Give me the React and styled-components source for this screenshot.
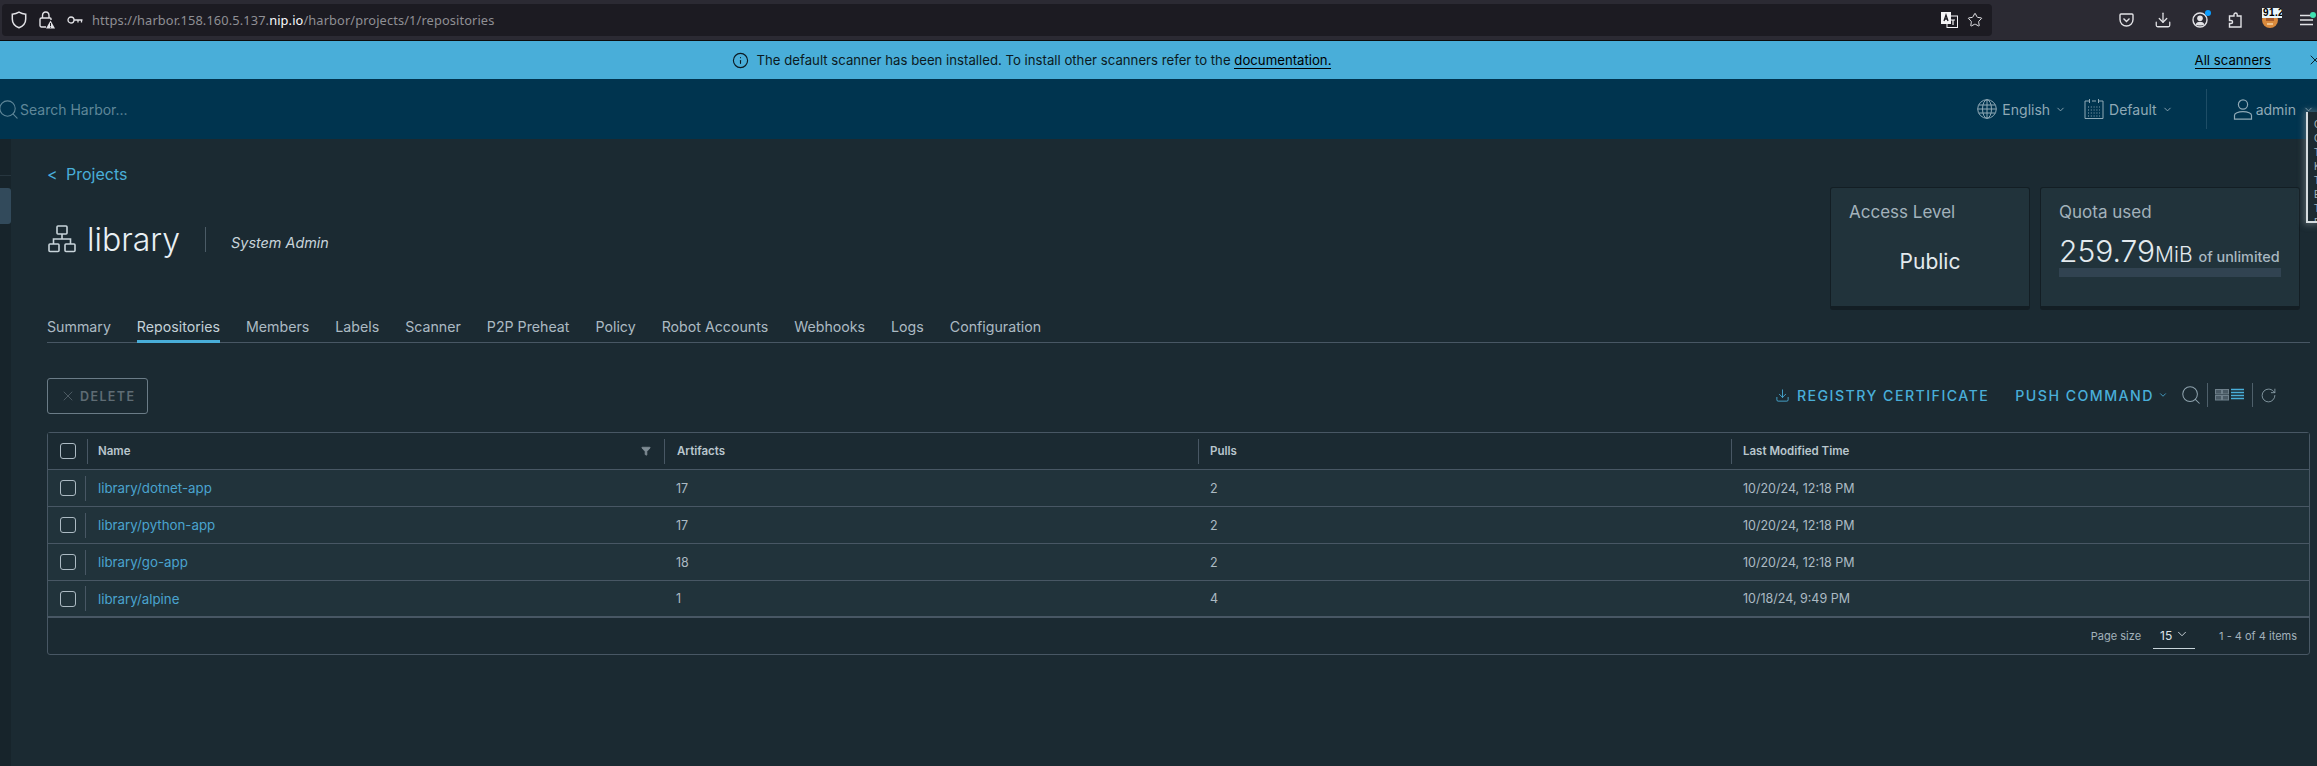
import React from 'react';
import styled, { createGlobalStyle } from 'styled-components';
import { ChevronDown, Search, X, Download, RotateCw, Info, Star, Filter } from 'lucide-react';

const FONT = 'Inter, "Open Sans", "Liberation Sans", sans-serif';

const GlobalStyle = createGlobalStyle`
  html, body {
    margin: 0;
    height: 100%;
    overflow: hidden;
    background: #1b2a32;
    font-family: ${FONT};
  }
  #root { height: 100%; }
  * { box-sizing: border-box; }
`;

const Page = styled.div`
  display: flex;
  flex-direction: column;
  height: 100vh;
  position: relative;
  overflow: hidden;
`;

/* browser chrome */
const BrowserBar = styled.div`
  display: flex;
  align-items: center;
  flex: none;
  height: 41px;
  padding: 0 4px 1px 2px;
  background: #2b2a33;
  border-bottom: 1px solid #0c0c0d;
  color: #e2e2e6;
`;

const UrlPill = styled.div`
  display: flex;
  align-items: center;
  width: 1990px;
  height: 32px;
  padding: 0 9px;
  background: #1c1b22;
  border-radius: 4px;
`;

const UrlIcon = styled.span`
  display: flex;
  flex: none;
  margin-left: ${({ $left }) => $left || 0}px;
`;

const UrlText = styled.div`
  margin-left: 9px;
  font: 12.8px "Noto Sans", ${FONT};
  letter-spacing: 0.12px;
  color: #8f8f94;
  flex: 1;
  b { font-weight: 400; color: #fbfbfe; }
`;

const BrowserTools = styled.div`
  display: flex;
  align-items: center;
  margin-left: auto;
  gap: 20px;
`;

const ToolIcon = styled.span`
  position: relative;
  display: flex;
  flex: none;
  margin-left: ${({ $left }) => $left || 0}px;
`;

const Dot = styled.i`
  position: absolute;
  top: -2px;
  right: -3px;
  width: 6px;
  height: 6px;
  border-radius: 50%;
  background: ${({ $color }) => $color};
`;

const AddonBadge = styled.span`
  position: absolute;
  top: -4px;
  left: 0;
  width: 20px;
  height: 10px;
  padding-left: 1px;
  overflow: hidden;
  background: #e9f6fb;
  color: #000;
  font: 700 10px/10px "Liberation Sans", sans-serif;
  letter-spacing: 0.4px;
  white-space: nowrap;
`;

/* info banner */
const Banner = styled.div`
  position: relative;
  display: flex;
  align-items: center;
  justify-content: center;
  flex: none;
  height: 38px;
  padding-right: 254px;
  background: #49aed9;
  color: #0b1a22;
  font-size: 13.2px;
`;

const BannerText = styled.span`
  margin-left: 8px;
`;

const BannerLink = styled.a`
  color: #000;
  text-decoration: none;
  border-bottom: 1px solid #000;
`;

const BannerRight = styled.div`
  position: absolute;
  right: 0;
  top: 0;
  height: 100%;
  display: flex;
  align-items: center;
  gap: 36px;
`;

/* harbor header */
const Header = styled.header`
  display: flex;
  align-items: center;
  flex: none;
  height: 60px;
  background: #00344f;
  color: #8fa9b6;
`;

const SearchBox = styled.div`
  display: flex;
  align-items: center;
  color: #5f8799;
  font-size: 14px;
`;

const HeaderRight = styled.div`
  display: flex;
  align-items: center;
  margin-left: auto;
  font-size: 14px;
`;

const HeaderItem = styled.div`
  display: flex;
  align-items: center;
  margin-left: ${({ $left }) => $left}px;
  gap: ${({ $gap }) => $gap || 5}px;
`;

const HeaderDivider = styled.div`
  width: 1px;
  height: 40px;
  margin-left: 33px;
  background: #1e4d66;
`;

const Body = styled.div`
  display: flex;
  flex: 1;
  min-height: 0;
`;

const Sidebar = styled.aside`
  flex: none;
  width: 11px;
  background: #17242b;
  padding-top: 36px;
`;

const SideRule = styled.div`
  height: 1px;
  background: #27363f;
`;

const SideActive = styled.div`
  height: 36px;
  margin-top: 12px;
  background: #324a5b;
  border-radius: 0 3px 3px 0;
`;

const Main = styled.main`
  flex: 1;
  min-width: 0;
  padding: 0 7px 0 36px;
  color: #acbac3;
`;

const TopRow = styled.div`
  display: flex;
  justify-content: space-between;
  height: 174px;
`;

const BackLink = styled.a`
  display: flex;
  align-items: center;
  height: 20px;
  margin-top: 25px;
  font-size: 16px;
  color: #49aed9;
`;

const BackArrow = styled.span`
  width: 19px;
`;

const TitleRow = styled.div`
  display: flex;
  align-items: center;
  margin-top: 37px;
  padding-left: 1px;
  height: 36px;
`;

const Title = styled.h1`
  margin: 0 0 0 11px;
  font-size: 32px;
  font-weight: 300;
  letter-spacing: 0;
  color: #e9f0f4;
`;

const TitleRule = styled.div`
  width: 1px;
  height: 25px;
  margin: 0 25px 0 25px;
  background: #4b5b66;
`;

const Role = styled.span`
  font-size: 14.4px;
  font-style: italic;
  color: #c8d4da;
  margin-top: 6px;
`;

const Cards = styled.div`
  display: flex;
  gap: 10px;
  margin: 48px 10px 0 0;
`;

const Card = styled.div`
  width: ${({ $width }) => $width}px;
  height: 123px;
  padding: 13px 18px;
  background: #21333b;
  border: 1px solid #131e24;
  border-bottom: 4px solid #131e24;
  border-radius: 3px;
`;

const CardTitle = styled.div`
  font-size: 17px;
  line-height: 22px;
  color: #a3b2bb;
`;

const PublicValue = styled.div`
  margin-top: 25px;
  font-size: 21px;
  line-height: 28px;
  text-align: center;
  color: #e3eaee;
`;

const QuotaValue = styled.div`
  display: flex;
  align-items: baseline;
  margin-top: 12px;
  height: 33px;
  color: #e3eaee;
  white-space: nowrap;
`;

const QuotaNumber = styled.span`
  font-size: 30px;
  line-height: 33px;
  font-weight: 300;
`;

const QuotaUnit = styled.span`
  font-size: 21px;
  font-weight: 300;
`;

const QuotaLimit = styled.span`
  margin-left: 6px;
  font-size: 14.4px;
  font-weight: 500;
  color: #a9b8c1;
`;

const QuotaBar = styled.div`
  width: 222px;
  height: 9px;
  background: #314351;
`;

const Tabs = styled.nav`
  display: flex;
  gap: 26px;
  height: 30px;
  border-bottom: 1px solid #485764;
`;

const Tab = styled.a`
  height: 30px;
  font-size: 14.2px;
  line-height: 28px;
  color: ${({ $active }) => ($active ? '#c4d1d8' : '#acbac3')};
  border-bottom: 3px solid ${({ $active }) => ($active ? '#49aed9' : 'transparent')};
  white-space: nowrap;
`;

const Toolbar = styled.div`
  display: flex;
  align-items: center;
  justify-content: space-between;
  height: 36px;
  margin-top: 35px;
`;

const DeleteButton = styled.button`
  display: flex;
  align-items: center;
  gap: 4px;
  width: 101px;
  height: 36px;
  padding: 0 0 0 12px;
  background: transparent;
  border: 1px solid #6b7c87;
  border-radius: 3px;
  color: #5f6c74;
  font: 600 12.5px ${FONT};
  letter-spacing: 1.4px;
`;

const ToolbarRight = styled.div`
  display: flex;
  align-items: center;
  margin: 0 33px 2px 0;
  color: #49aed9;
`;

const ActionLink = styled.a`
  display: flex;
  align-items: center;
  gap: 7px;
  margin-left: ${({ $left }) => $left || 0}px;
  font-size: 14.2px;
  font-weight: 500;
  letter-spacing: 1.45px;
  white-space: nowrap;
`;

const ToolDivider = styled.div`
  width: 1px;
  height: 24px;
  margin: 0 7px;
  background: #4f606b;
`;

const RepoTable = styled.div`
  margin-top: 18px;
  border: 1px solid #485764;
  border-radius: 3px;
  font-size: 12.5px;
`;

const Row = styled.div`
  display: grid;
  grid-template-columns: 40px 576px 534px 533px 1fr;
  height: 37px;
  background: ${({ $head }) => ($head ? '#1b2a32' : '#21333b')};
  border-bottom: 1px solid #485764;
  &:nth-child(5) {
    border-bottom-width: 2px;
  }
`;

const CheckCell = styled.div`
  display: flex;
  align-items: center;
  justify-content: flex-end;
  gap: ${({ $head }) => ($head ? 11 : 9)}px;
  padding-right: ${({ $head }) => ($head ? 0 : 2)}px;
`;

const Checkbox = styled.span`
  width: 16px;
  height: 16px;
  border: 1px solid #acbac3;
  border-radius: 3px;
`;

const ColRule = styled.span`
  flex: none;
  width: 1px;
  height: 25px;
  margin-right: ${({ $right }) => $right || 0}px;
  background: #485764;
`;

const Cell = styled.div`
  display: flex;
  align-items: center;
  padding-left: ${({ $pad }) => $pad || 12}px;
`;

const HeadCell = styled(Cell)`
  gap: 12px;
  padding-left: 0;
  font-size: 11.5px;
  font-weight: 600;
  color: #b9c6cd;
`;

const HeadLabel = styled.span`
  margin-left: ${({ $left }) => $left}px;
`;

const RepoLink = styled.a`
  font-size: 13.3px;
  color: #4aa3cf;
`;

const FilterSlot = styled.span`
  display: flex;
  margin-left: auto;
  margin-right: 1px;
  color: #7f8c94;
`;

const TableFooter = styled.div`
  display: flex;
  align-items: center;
  justify-content: flex-end;
  height: 36px;
  padding-right: 12px;
  font-size: 11px;
  color: #a3b2bb;
`;

const PageSelect = styled.div`
  display: flex;
  align-items: center;
  justify-content: space-between;
  width: 42px;
  height: 25px;
  margin: 0 24px 0 12px;
  padding: 0 6px 0 7px;
  border-bottom: 1px solid #c8d4da;
  color: #dbe4e9;
  font-size: 12px;
`;

const CornerPanel = styled.div`
  position: absolute;
  top: 112px;
  right: 0;
  width: 11px;
  height: 111px;
  padding: 6px 0 0 6px;
  overflow: hidden;
  background: #1c2a31;
  border-left: 2px solid #d5dcdf;
  border-bottom: 2px solid #d5dcdf;
  box-shadow: 0 0 6px 2px rgba(120, 130, 135, 0.6);
  color: #a8b4ba;
  font: 10px/14px "Liberation Sans", sans-serif;
`;

const ShieldIcon = () => (
  <svg width="16" height="18" viewBox="0 0 16 18" fill="none" stroke="currentColor" strokeWidth="1.5">
    <path d="M8 1.2 C5.5 2.6 3.4 3 1.3 3.2 V8 C1.3 12.4 4.5 15.4 8 16.8 C11.5 15.4 14.7 12.4 14.7 8 V3.2 C12.6 3 10.5 2.6 8 1.2 Z" />
  </svg>
);

const LockWarnIcon = () => (
  <svg width="16" height="18" viewBox="0 0 16 18" fill="none" stroke="currentColor" strokeWidth="1.4">
    <path d="M3.5 7 V4.8 C3.5 2.6 5 1 6.8 1 S10 2.6 10 4.8 V7" />
    <path d="M7 16 H2.5 C1.6 16 1 15.4 1 14.6 V8.4 C1 7.6 1.6 7 2.5 7 H11 C11.6 7 12 7.3 12 7.8 V9" />
    <path d="M11.5 9.5 L16 17.5 H7 Z" fill="currentColor" stroke="none" />
    <path d="M11.5 12 V15 M11.5 15.8 V16.6" stroke="#1c1b22" strokeWidth="1" />
  </svg>
);

const KeyIcon = () => (
  <svg width="16" height="10" viewBox="0 0 16 10" fill="none" stroke="currentColor" strokeWidth="1.3">
    <circle cx="4" cy="5" r="3" />
    <path d="M7 5 H15.5 M11 5 V7.5 M14.5 5 V7.5" />
  </svg>
);

const TranslateIcon = () => (
  <svg width="17" height="16" viewBox="0 0 17 16">
    <rect x="6" y="4" width="10.5" height="11.5" fill="#1c1b22" stroke="#f4f4f6" />
    <rect x="0" y="0" width="10" height="12" fill="#f4f4f6" />
    <path d="M3 9 L5 3 L7 9 M3.8 7 H6.2" stroke="#1c1b22" strokeWidth="1.3" fill="none" />
    <path d="M10 8 H14 M12 8 V13" stroke="#f4f4f6" strokeWidth="1.2" />
  </svg>
);

const PocketIcon = () => (
  <svg width="15" height="14" viewBox="0 0 15 14" fill="none" stroke="currentColor" strokeWidth="1.4">
    <path d="M2 1 H13 C13.6 1 14 1.4 14 2 V6.5 C14 10.2 11 13 7.5 13 S1 10.2 1 6.5 V2 C1 1.4 1.4 1 2 1 Z" />
    <path d="M4.5 5.5 L7.5 8.5 L10.5 5.5" />
  </svg>
);

const AccountIcon = () => (
  <svg width="16" height="16" viewBox="0 0 16 16" fill="none">
    <circle cx="8" cy="8" r="7" stroke="currentColor" strokeWidth="1.4" />
    <circle cx="8" cy="6.2" r="2.8" fill="currentColor" />
    <path d="M3.6 12.4 C4.6 10.4 6 9.8 8 9.8 S11.4 10.4 12.4 12.4 C11 13.8 5 13.8 3.6 12.4 Z" fill="currentColor" />
  </svg>
);

const PuzzleIcon = () => (
  <svg width="14" height="16" viewBox="0 0 14 16" fill="none" stroke="currentColor" strokeWidth="1.4">
    <path d="M6 4 V2.6 C6 1.6 6.8 1 7.6 1 S9.2 1.6 9.2 2.6 V4 H13 V15 H1.5 V11.5 H3 C4 11.5 4.6 10.8 4.6 10 S4 8.5 3 8.5 H1.5 V4 Z" />
  </svg>
);

const AddonIcon = () => (
  <svg width="16" height="16" viewBox="0 0 16 16">
    <circle cx="8" cy="8" r="8" fill="#d98a3d" />
    <rect x="4" y="6" width="8" height="3" fill="#a85a2a" />
    <path d="M5 12 H11" stroke="#f6d4a8" strokeWidth="1.5" />
  </svg>
);

const MenuIcon = () => (
  <svg width="13" height="12" viewBox="0 0 13 12" stroke="currentColor" strokeWidth="1.4">
    <path d="M0 1.5 H13 M0 6 H13 M0 10.5 H13" />
  </svg>
);

const GlobeIcon = () => (
  <svg width="20" height="20" viewBox="0 0 20 20" fill="none" stroke="currentColor" strokeWidth="1">
    <circle cx="10" cy="10" r="9.3" />
    <ellipse cx="10" cy="10" rx="4.5" ry="9.3" />
    <path d="M10 0.7 V19.3 M1.6 6 H18.4 M0.8 10 H19.2 M1.6 14 H18.4" />
  </svg>
);

const CalendarIcon = () => (
  <svg width="20" height="22" viewBox="0 0 20 22" fill="none" stroke="currentColor" strokeWidth="1">
    <path d="M5 3 H1 V20.5 H19 V3 H15 M8 3 H12" />
    <path d="M5.5 1 V5 M14.5 1 V5" />
    <path d="M4 9 H16 M4 12 H16 M4 15 H16 M4 18 H16" strokeDasharray="1 1.8" />
  </svg>
);

const UserIcon = () => (
  <svg width="20" height="21" viewBox="0 0 20 21" fill="none" stroke="currentColor" strokeWidth="1.2">
    <circle cx="10" cy="5.5" r="4.6" />
    <path d="M1.5 20.2 V16.2 C1.5 14.6 5 12.6 10 12.6 S18.5 14.6 18.5 16.2 V20.2 Z" />
  </svg>
);

const ProjectIcon = () => (
  <svg width="28" height="28" viewBox="0 0 28 28" fill="none" stroke="#c8d4da" strokeWidth="1.6">
    <rect x="9" y="1" width="10" height="8" rx="1" />
    <path d="M14 9 V14 M5.5 19 V14 H22.5 V19" />
    <rect x="1" y="19" width="10" height="7.5" rx="1" />
    <rect x="17" y="19" width="10" height="7.5" rx="1" />
  </svg>
);

const ViewToggleIcon = () => (
  <svg width="30" height="14" viewBox="0 0 30 14">
    <g fill="none" stroke="#6f808b">
      <rect x="0.5" y="1.5" width="6" height="4.5" fill="#4a5a65" />
      <rect x="7.5" y="1.5" width="6" height="4.5" fill="#4a5a65" />
      <rect x="0.5" y="7.5" width="6" height="4.5" fill="#4a5a65" />
      <rect x="7.5" y="7.5" width="6" height="4.5" fill="#4a5a65" />
    </g>
    <path d="M16 1.5 H29 M16 4.5 H29 M16 7.5 H29 M16 10.5 H29" stroke="#49aed9" strokeWidth="1.3" />
  </svg>
);

const repos = [
  { name: 'library/dotnet-app', artifacts: 17, pulls: 2, time: '10/20/24, 12:18 PM' },
  { name: 'library/python-app', artifacts: 17, pulls: 2, time: '10/20/24, 12:18 PM' },
  { name: 'library/go-app', artifacts: 18, pulls: 2, time: '10/20/24, 12:18 PM' },
  { name: 'library/alpine', artifacts: 1, pulls: 4, time: '10/18/24, 9:49 PM' },
];

const tabs = ['Summary', 'Repositories', 'Members', 'Labels', 'Scanner', 'P2P Preheat', 'Policy', 'Robot Accounts', 'Webhooks', 'Logs', 'Configuration'];

export default function App() {
  return (
    <Page>
      <GlobalStyle />
      <BrowserBar>
        <UrlPill>
          <UrlIcon><ShieldIcon /></UrlIcon>
          <UrlIcon $left={12}><LockWarnIcon /></UrlIcon>
          <UrlIcon $left={12}><KeyIcon /></UrlIcon>
          <UrlText>https://harbor.158.160.5.137.<b>nip.io</b>/harbor/projects/1/repositories</UrlText>
          <UrlIcon><TranslateIcon /></UrlIcon>
          <UrlIcon $left={9}><Star size={16} strokeWidth={1.5} /></UrlIcon>
        </UrlPill>
        <BrowserTools>
          <ToolIcon><PocketIcon /></ToolIcon>
          <ToolIcon><Download size={18} strokeWidth={1.7} /></ToolIcon>
          <ToolIcon><AccountIcon /><Dot $color="#0a9dff" /></ToolIcon>
          <ToolIcon><PuzzleIcon /></ToolIcon>
          <ToolIcon><AddonIcon /><AddonBadge>91.2</AddonBadge></ToolIcon>
          <ToolIcon $left={2}><MenuIcon /><Dot $color="#3fe1b0" /></ToolIcon>
        </BrowserTools>
      </BrowserBar>

      <Banner>
        <Info size={17} strokeWidth={1.6} />
        <BannerText>
          The default scanner has been installed. To install other scanners refer to the <BannerLink>documentation.</BannerLink>
        </BannerText>
        <BannerRight>
          <BannerLink>All scanners</BannerLink>
          <X size={16} strokeWidth={1.4} style={{ marginRight: -6 }} />
        </BannerRight>
      </Banner>

      <Header>
        <SearchBox>
          <Search size={23} strokeWidth={1.1} style={{ marginLeft: -3 }} />
          Search Harbor...
        </SearchBox>
        <HeaderRight>
          <HeaderItem $left={0}><GlobeIcon />English<ChevronDown size={11} /></HeaderItem>
          <HeaderItem $left={18}><CalendarIcon />Default<ChevronDown size={11} /></HeaderItem>
          <HeaderDivider />
          <HeaderItem $left={26} $gap={3}><UserIcon />admin<ChevronDown size={11} style={{ marginLeft: 4, marginRight: 3 }} /></HeaderItem>
        </HeaderRight>
      </Header>

      <Body>
        <Sidebar>
          <SideRule />
          <SideActive />
        </Sidebar>
        <Main>
          <TopRow>
            <div>
              <BackLink><BackArrow>&lt;</BackArrow>Projects</BackLink>
              <TitleRow>
                <ProjectIcon />
                <Title>library</Title>
                <TitleRule />
                <Role>System Admin</Role>
              </TitleRow>
            </div>
            <Cards>
              <Card $width={200}>
                <CardTitle>Access Level</CardTitle>
                <PublicValue>Public</PublicValue>
              </Card>
              <Card $width={260}>
                <CardTitle>Quota used</CardTitle>
                <QuotaValue>
                  <QuotaNumber>259.79</QuotaNumber>
                  <QuotaUnit>MiB</QuotaUnit>
                  <QuotaLimit>of unlimited</QuotaLimit>
                </QuotaValue>
                <QuotaBar />
              </Card>
            </Cards>
          </TopRow>

          <Tabs>
            {tabs.map((tab) => (
              <Tab key={tab} $active={tab === 'Repositories'}>{tab}</Tab>
            ))}
          </Tabs>

          <Toolbar>
            <DeleteButton><X size={16} strokeWidth={1.1} />DELETE</DeleteButton>
            <ToolbarRight>
              <ActionLink><Download size={15} strokeWidth={1.4} />REGISTRY CERTIFICATE</ActionLink>
              <ActionLink $left={26}>PUSH COMMAND<ChevronDown size={10} style={{ marginLeft: -3 }} /></ActionLink>
              <Search size={22} strokeWidth={1.1} color="#8fa3ae" style={{ marginLeft: 12, marginRight: -2 }} />
              <ToolDivider />
              <ViewToggleIcon />
              <ToolDivider />
              <RotateCw size={17} strokeWidth={1.2} color="#8fa3ae" />
            </ToolbarRight>
          </Toolbar>

          <RepoTable>
            <Row $head>
              <CheckCell $head><Checkbox /><ColRule /></CheckCell>
              <HeadCell>
                <HeadLabel $left={10}>Name</HeadLabel>
                <FilterSlot><Filter size={10} fill="currentColor" /></FilterSlot>
                <ColRule $right={-1} />
              </HeadCell>
              <HeadCell><HeadLabel $left={13}>Artifacts</HeadLabel></HeadCell>
              <HeadCell><ColRule /><HeadLabel $left={-1}>Pulls</HeadLabel></HeadCell>
              <HeadCell><ColRule /><HeadLabel $left={-1}>Last Modified Time</HeadLabel></HeadCell>
            </Row>
            {repos.map((repo) => (
              <Row key={repo.name}>
                <CheckCell><Checkbox /><ColRule /></CheckCell>
                <Cell $pad={10}><RepoLink>{repo.name}</RepoLink></Cell>
                <Cell>{repo.artifacts}</Cell>
                <Cell>{repo.pulls}</Cell>
                <Cell>{repo.time}</Cell>
              </Row>
            ))}
            <TableFooter>
              Page size
              <PageSelect>15<ChevronDown size={14} strokeWidth={1.5} style={{ marginTop: -3 }} /></PageSelect>
              1 - 4 of 4 items
            </TableFooter>
          </RepoTable>
        </Main>
      </Body>

      <CornerPanel>C C T K T E T E</CornerPanel>
    </Page>
  );
}
